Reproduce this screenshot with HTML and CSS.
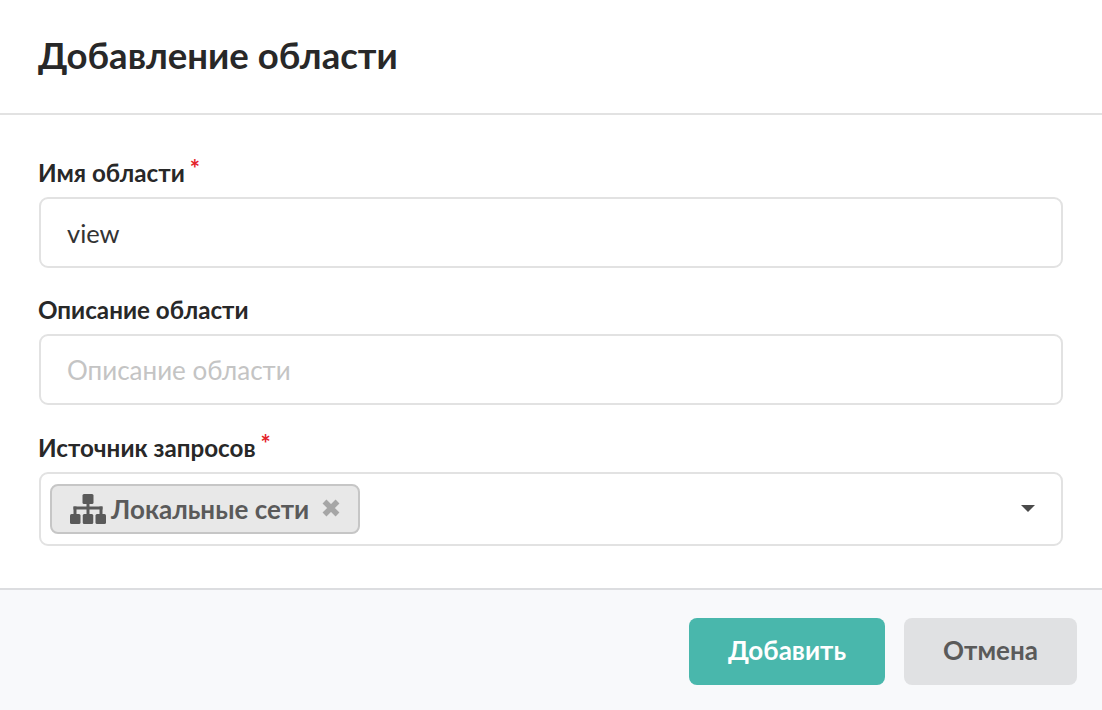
FILE: index.html
```html
<!DOCTYPE html>
<html>
<head>
<meta charset="utf-8">
<title>Добавление области</title>
<link rel="stylesheet" href="styles.css">
</head>
<body>
<div class="modal">
  <div class="modal-header">Добавление области</div>
  <div class="modal-body">
    <div class="field">
      <label class="field-label">Имя области<span class="required">*</span></label>
      <div class="input">view</div>
    </div>
    <div class="field">
      <label class="field-label">Описание области</label>
      <div class="input placeholder">Описание области</div>
    </div>
    <div class="field">
      <label class="field-label">Источник запросов<span class="required">*</span></label>
      <div class="input select">
        <div class="tag">
          <svg class="tag-icon" viewBox="0 0 36 30" width="36" height="30">
            <g fill="#5a5a5a">
              <rect x="12.500" y="0" width="11" height="10" rx="1.500"/>
              <rect x="16.500" y="9" width="3" height="12"/>
              <rect x="3.500" y="12.500" width="29" height="3"/>
              <rect x="3.500" y="12.500" width="3" height="8"/>
              <rect x="29.500" y="12.500" width="3" height="8"/>
              <rect x="0" y="20" width="10.500" height="10" rx="1.500"/>
              <rect x="12.750" y="20" width="10.500" height="10" rx="1.500"/>
              <rect x="25.500" y="20" width="10.500" height="10" rx="1.500"/>
            </g>
          </svg>
          <span class="tag-text">Локальные сети</span>
          <svg class="tag-close" viewBox="0 0 18 18" width="18" height="18">
            <path d="M2.500 2.500l13 13M15.500 2.500l-13 13" stroke="#a6a6a6" stroke-width="5.500" fill="none"/>
          </svg>
        </div>
        <span class="caret"></span>
      </div>
    </div>
  </div>
  <div class="modal-footer">
    <button class="btn btn-primary">Добавить</button>
    <button class="btn btn-cancel">Отмена</button>
  </div>
</div>
</body>
</html>
```

FILE: styles.css
```css
html, body {
  margin: 0;
  padding: 0;
  background: #fff;
}

body {
  font-family: Lato, "Open Sans", "Noto Sans", sans-serif;
  color: #282828;
}

.modal {
  width: 1102px;
  height: 710px;
  display: flex;
  flex-direction: column;
  overflow: hidden;
}

.modal-header {
  height: 113px;
  box-sizing: border-box;
  padding: 33px 38px 0;
  font-size: 36.500px;
  line-height: 44px;
  font-weight: 700;
}

.modal-body {
  border-top: 2px solid #e2e2e2;
  border-bottom: 2px solid #dcdde0;
  height: 477px;
  box-sizing: border-box;
  padding: 42px 39px 0;
}

.field {
  margin-bottom: 26.400px;
}

.field-label {
  display: block;
  height: 40px;
  margin-left: -1px;
  font-size: 24.200px;
  line-height: 32px;
  font-weight: 700;
}

.required {
  color: #e4222a;
  font-size: 24px;
  line-height: 0;
  margin-left: 5px;
  vertical-align: 4px;
}

.input {
  height: 71px;
  box-sizing: border-box;
  border: 2px solid #e2e2e2;
  border-radius: 9px;
  padding: 0 26px;
  font-size: 25.500px;
  line-height: 69px;
  color: #333;
}

.placeholder {
  font-size: 26px;
  color: #c4c4c4;
}

.select {
  height: 74px;
  display: flex;
  align-items: center;
  justify-content: space-between;
  padding: 0 26px 0 9px;
}

.tag {
  display: flex;
  align-items: center;
  height: 50px;
  width: 310px;
  box-sizing: border-box;
  padding: 0 18px;
  background: #e8e8e8;
  border: 2px solid #c6c6c6;
  border-radius: 8px;
  color: #5a5a5a;
  font-size: 26px;
  line-height: 46px;
  font-weight: 700;
}

.tag-icon {
  flex: none;
  margin-right: 5px;
}

.tag-text {
  flex: 1;
  white-space: nowrap;
}

.tag-close {
  flex: none;
  margin-top: -2px;
}

.caret {
  width: 0;
  height: 0;
  border-left: 7px solid transparent;
  border-right: 7px solid transparent;
  border-top: 7px solid #4a4a4a;
}

.modal-footer {
  flex: 1;
  display: flex;
  justify-content: flex-end;
  gap: 19px;
  padding: 28px 25px 0 0;
  background: #f8f9fb;
}

.btn {
  height: 67px;
  padding: 0 0 3px;
  border: 0;
  border-radius: 8px;
  font-family: inherit;
  font-size: 26px;
  font-weight: 700;
}

.btn-primary {
  width: 196px;
  background: #49b7ac;
  color: #fff;
}

.btn-cancel {
  width: 173px;
  background: #e0e1e3;
  color: #5a5a5a;
}
```
